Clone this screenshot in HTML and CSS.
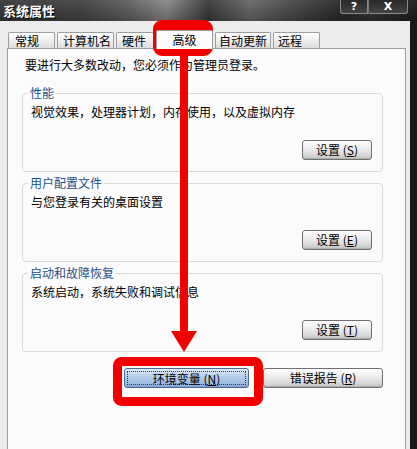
FILE: index.html
```html
<!DOCTYPE html>
<html lang="zh-CN">
<head>
<meta charset="utf-8">
<title>系统属性</title>
<link rel="stylesheet" href="styles.css">
</head>
<body>
<div class="window">
  <div class="titlebar">
    <span class="title">系统属性</span>
    <div class="caption-btns">
      <span class="cbtn help">?</span>
      <span class="cbtn close">X</span>
    </div>
  </div>
  <div class="body">
    <div class="tabs">
      <span class="tab t1">常规</span>
      <span class="tab t2">计算机名</span>
      <span class="tab t3">硬件</span>
      <span class="tab t4 active">高级</span>
      <span class="tab t5">自动更新</span>
      <span class="tab t6">远程</span>
    </div>
    <div class="panel">
      <p class="intro">要进行大多数改动，您必须作为管理员登录。</p>
      <fieldset class="group">
        <legend>性能</legend>
        <p class="desc">视觉效果，处理器计划，内存使用，以及虚拟内存</p>
        <div class="row"><button class="btn">设置 (<u>S</u>)</button></div>
      </fieldset>
      <fieldset class="group">
        <legend>用户配置文件</legend>
        <p class="desc">与您登录有关的桌面设置</p>
        <div class="row"><button class="btn">设置 (<u>E</u>)</button></div>
      </fieldset>
      <fieldset class="group">
        <legend>启动和故障恢复</legend>
        <p class="desc">系统启动，系统失败和调试信息</p>
        <div class="row"><button class="btn">设置 (<u>T</u>)</button></div>
      </fieldset>
      <div class="actions">
        <button class="btn wide env"><span class="focus">环境变量 (<u>N</u>)</span></button>
        <button class="btn wide err">错误报告 (<u>R</u>)</button>
      </div>
    </div>
  </div>
  <svg class="annot" width="417" height="449" viewBox="0 0 417 449">
    <rect x="158" y="25" width="50" height="26" rx="4" fill="none" stroke="#f20000" stroke-width="10"/>
    <rect x="180" y="55" width="8" height="279" fill="#f20000"/>
    <polygon points="171,331 197,331 184,352" fill="#f20000"/>
    <rect x="117.5" y="361.5" width="141" height="40" rx="4" fill="none" stroke="#f20000" stroke-width="9"/>
  </svg>
</div>
</body>
</html>
```
FILE: styles.css
```css
* { box-sizing: border-box; }
html, body { margin: 0; padding: 0; }
body {
  width: 417px;
  height: 449px;
  overflow: hidden;
  font-family: "Noto Sans CJK SC", "Noto Sans", sans-serif;
  font-size: 12px;
  color: #000;
  background: #1a1a1a;
}
.window {
  position: relative;
  width: 417px;
  height: 449px;
}
.titlebar {
  height: 21px;
  display: flex;
  align-items: flex-start;
  justify-content: space-between;
  background:
    linear-gradient(to bottom, rgba(255,255,255,0.05), rgba(0,0,0,0.25)),
    linear-gradient(to right, #3a3a3a 0%, #454545 20%, #5f5f5f 30%, #8a8a8a 40%, #3c3c3c 50%, #6a6a6a 60%, #4a4a4a 70%, #2a2a2a 82%, #333 90%, #1c1c1c 100%);
}
.title {
  margin: 2px 0 0 3px;
  color: #fff;
  font-weight: bold;
  font-size: 13px;
  line-height: 17px;
  text-shadow: 1px 1px 0 #000;
}
.caption-btns {
  display: flex;
  margin-right: 9px;
}
.cbtn {
  height: 14px;
  line-height: 13px;
  text-align: center;
  color: #fff;
  font-family: "DejaVu Sans", sans-serif;
  font-weight: bold;
  font-size: 11px;
  background: linear-gradient(#2a2a2a, #444);
  border: 1px solid #8a8a8a;
  border-top: 0;
}
.help { width: 28px; border-radius: 0 0 0 3px; }
.close { width: 40px; border-left: 1px solid #777; border-radius: 0 0 3px 0; }
.body {
  height: 428px;
  background: #ececec;
  border-right: 7px solid #1a1a1a;
  padding-top: 11px;
}
.tabs {
  display: flex;
  gap: 2px;
  height: 16px;
  margin-left: 8px;
  align-items: flex-end;
}
.tab {
  height: 16px;
  line-height: 16px;
  padding-left: 5px;
  border: 1px solid #9a9fa0;
  border-bottom: 0;
  border-radius: 2px 2px 0 0;
  background: linear-gradient(#ffffff, #f0f0f0 45%, #dcdcdc);
  white-space: nowrap;
}
.t1 { width: 47px; padding-left: 6px; }
.t2 { width: 57px; }
.t3 { width: 38px; }
.t4 { width: 57px; }
.t5 { width: 56px; padding-left: 3px; }
.t6 { width: 47px; padding-left: 4px; }
.tab.active {
  height: 19px;
  line-height: 17px;
  padding-left: 0;
  text-align: center;
  background: #fbfbfb;
  margin-bottom: -1px;
  position: relative;
  z-index: 1;
}
.panel {
  width: 399px;
  height: 401px;
  margin-left: 7px;
  border: 1px solid #9a9fa0;
  border-bottom: 0;
  background: #fbfbfb;
  padding: 9px 0 0 0;
}
.intro {
  margin: 0 0 0 17px;
  line-height: 14px;
}
.group {
  margin: 15px 22px 0 14px;
  padding: 6px 10px 11px 8px;
  border: 1px solid #dadad5;
  border-radius: 4px;
}
.group + .group { margin-top: 5px; }
.group legend {
  margin-left: -3px;
  padding: 0 2px;
  line-height: 12px;
  color: #1d4f8c;
}
.desc {
  margin: 0;
  line-height: 14px;
}
.row {
  display: flex;
  justify-content: flex-end;
  margin-top: 21px;
}
.btn {
  width: 70px;
  height: 20px;
  padding: 0;
  font-family: inherit;
  font-size: 12px;
  line-height: 18px;
  color: #000;
  border: 1px solid #707070;
  border-radius: 3px;
  background: linear-gradient(#fefefe, #ebebeb 45%, #d2d2d2 85%, #bdbdbd);
  box-shadow: inset 0 -1px 0 rgba(0,0,0,0.08);
}
.actions {
  display: flex;
  justify-content: flex-end;
  gap: 14px;
  margin: 16px 22px 0 0;
}
.wide { width: 120px; }
.env {
  width: 125px;
  padding: 2px;
  border-color: #4a6a9a;
  background: linear-gradient(#e3ecf8, #b9cfec 40%, #9dbbe3 80%, #8eaedb);
}
.focus {
  display: block;
  height: 14px;
  line-height: 13px;
  border: 1px dotted #333;
}
.annot {
  position: absolute;
  left: 0;
  top: 0;
  pointer-events: none;
}
```
